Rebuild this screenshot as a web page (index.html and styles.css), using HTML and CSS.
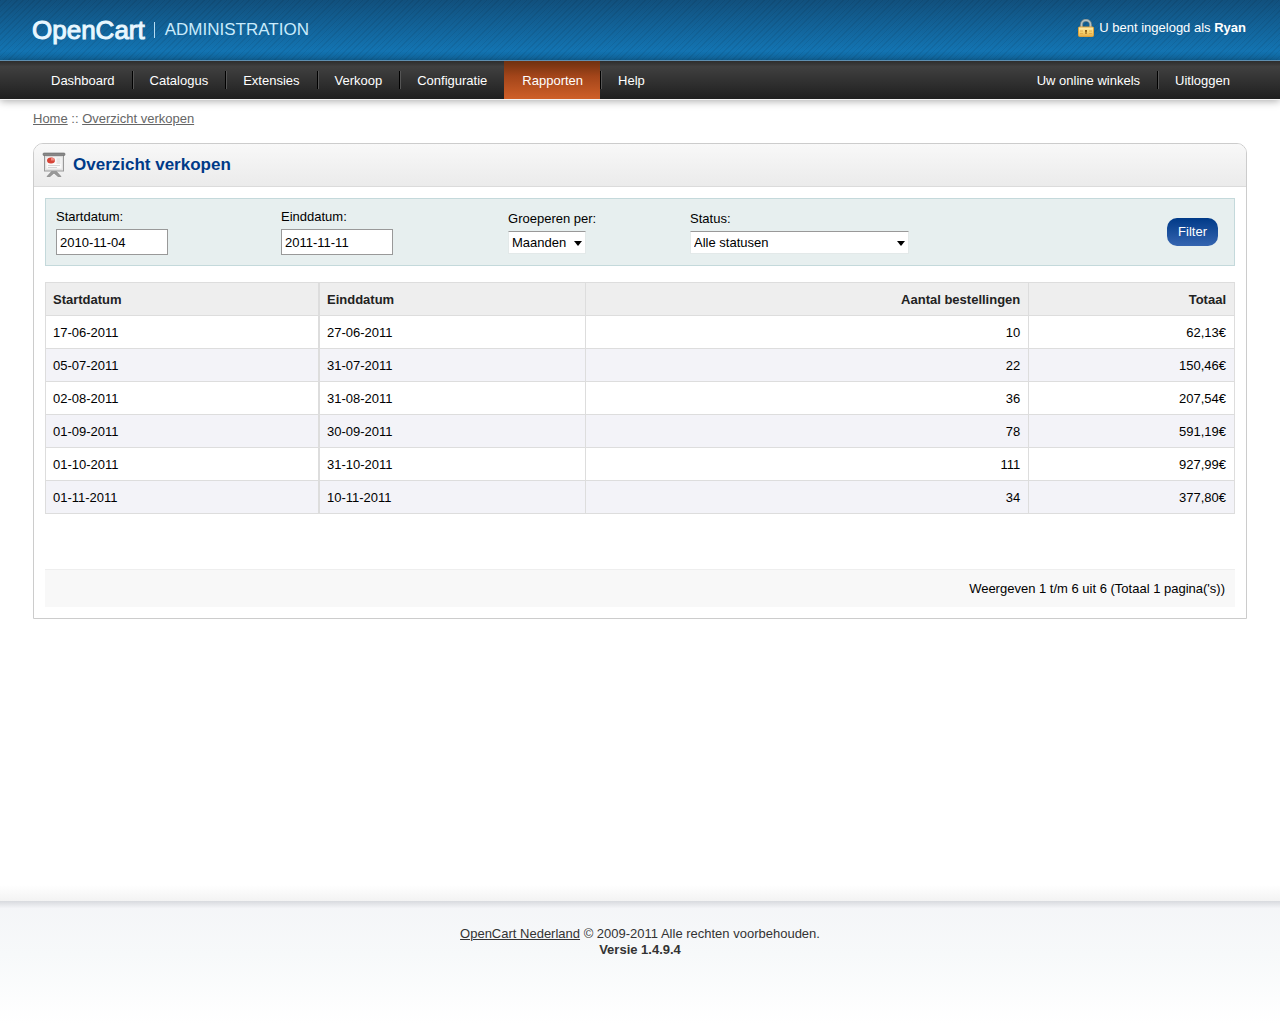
FILE: index.html
```html
<!DOCTYPE html>
<html lang="nl">
<head>
    <meta charset="UTF-8">
    <meta name="viewport" content="width=device-width, initial-scale=1.0">
    <title>Overzicht verkopen</title>
    <link rel="stylesheet" href="styles.css">
</head>
<body>

<header class="header">
    <div class="logo">
        <span class="logo-name">OpenCart</span>
        <span class="logo-section">ADMINISTRATION</span>
    </div>
    <div class="login">
        <svg class="lock" width="16" height="18" viewBox="0 0 16 18" aria-hidden="true">
            <defs>
                <linearGradient id="gold" x1="0" y1="0" x2="0" y2="1">
                    <stop offset="0" stop-color="#ffeeb0"/>
                    <stop offset="0.6" stop-color="#f8d068"/>
                    <stop offset="1" stop-color="#e8ac48"/>
                </linearGradient>
            </defs>
            <path d="M3.5 9V5.5a4.5 4.2 0 0 1 9 0V9" fill="none" stroke="#6e8489" stroke-width="3"/>
            <path d="M3.5 9V5.5a4.5 4.2 0 0 1 9 0V9" fill="none" stroke="#b4c2c3" stroke-width="1.4"/>
            <rect x="0.5" y="8" width="15" height="9.5" rx="1" fill="url(#gold)" stroke="#dda23b"/>
            <path d="M2 12h3M11 12h3M2 14.5h3M11 14.5h3" stroke="#e2ac4c"/>
            <path d="M7 11h2v1.5l-.4.5v2H7.4v-2l-.4-.5z" fill="#8a5b12"/>
        </svg>
        <span>U bent ingelogd als <strong>Ryan</strong></span>
    </div>
</header>

<nav class="menu">
    <ul>
        <li><a href="#">Dashboard</a></li>
        <li><a href="#">Catalogus</a></li>
        <li><a href="#">Extensies</a></li>
        <li><a href="#">Verkoop</a></li>
        <li><a href="#">Configuratie</a></li>
        <li class="selected"><a href="#">Rapporten</a></li>
        <li><a href="#">Help</a></li>
    </ul>
    <ul>
        <li><a href="#">Uw online winkels</a></li>
        <li><a href="#">Uitloggen</a></li>
    </ul>
</nav>

<main class="content">
    <div class="breadcrumb"><a href="#">Home</a> :: <a href="#">Overzicht verkopen</a></div>

    <section class="box">
        <div class="heading">
            <svg width="24" height="26" viewBox="0 0 24 26" aria-hidden="true">
                <path d="M11 18L5 24.5h3l4-3.5 4 3.5h3L13 18z" fill="#999" stroke="#777" stroke-width="0.6"/>
                <rect x="2.5" y="3" width="19" height="16" fill="#e6e6e6" stroke="#999"/>
                <rect x="4" y="5" width="16" height="12" fill="#fafafa" stroke="#ddd" stroke-width="0.6"/>
                <rect x="1" y="1" width="22" height="2.6" rx="1" fill="#888" stroke="#666" stroke-width="0.6"/>
                <ellipse cx="9" cy="8.5" rx="4" ry="3" fill="#d64538"/>
                <path d="M9 8.5V5.5a4 3 0 0 1 4 3z" fill="#ee8a80"/>
                <path d="M14.5 7h4M14.5 9h4M14.5 11h4M6 13.5h12M6 15.5h9" stroke="#ccc" stroke-width="0.8"/>
            </svg>
            <h1>Overzicht verkopen</h1>
        </div>

        <div class="box-content">
            <form class="filter">
                <div class="field">
                    <label for="date-start">Startdatum:</label>
                    <input type="text" id="date-start" value="2010-11-04">
                </div>
                <div class="field">
                    <label for="date-end">Einddatum:</label>
                    <input type="text" id="date-end" value="2011-11-11">
                </div>
                <div class="field">
                    <label for="group">Groeperen per:</label>
                    <div class="select">
                        <select id="group" class="group-select">
                            <option>Maanden</option>
                        </select>
                    </div>
                </div>
                <div class="field">
                    <label for="status">Status:</label>
                    <div class="select">
                        <select id="status" class="status-select">
                            <option>Alle statusen</option>
                        </select>
                    </div>
                </div>
                <button type="button" class="button">Filter</button>
            </form>

            <table class="list">
                <colgroup>
                    <col class="col-start">
                    <col class="col-end">
                    <col class="col-orders">
                    <col class="col-total">
                </colgroup>
                <thead>
                    <tr><th>Startdatum</th><th>Einddatum</th><th class="right">Aantal bestellingen</th><th class="right">Totaal</th></tr>
                </thead>
                <tbody>
                    <tr><td>17-06-2011</td><td>27-06-2011</td><td class="right">10</td><td class="right">62,13€</td></tr>
                    <tr><td>05-07-2011</td><td>31-07-2011</td><td class="right">22</td><td class="right">150,46€</td></tr>
                    <tr><td>02-08-2011</td><td>31-08-2011</td><td class="right">36</td><td class="right">207,54€</td></tr>
                    <tr><td>01-09-2011</td><td>30-09-2011</td><td class="right">78</td><td class="right">591,19€</td></tr>
                    <tr><td>01-10-2011</td><td>31-10-2011</td><td class="right">111</td><td class="right">927,99€</td></tr>
                    <tr><td>01-11-2011</td><td>10-11-2011</td><td class="right">34</td><td class="right">377,80€</td></tr>
                </tbody>
            </table>

            <div class="pagination">Weergeven 1 t/m 6 uit 6 (Totaal 1 pagina('s))</div>
        </div>
    </section>
</main>

<footer class="footer">
    <a href="#">OpenCart Nederland</a> © 2009-2011 Alle rechten voorbehouden.<br>
    <strong>Versie 1.4.9.4</strong>
</footer>

</body>
</html>
```
FILE: styles.css
```css
*,
*::before,
*::after {
    box-sizing: border-box;
}
body {
    display: flex;
    flex-direction: column;
    min-height: 100vh;
    margin: 0;
    background: #fff;
    color: #000;
    font-family: "Liberation Sans", Arial, sans-serif;
    font-size: 13px;
    line-height: 16px;
}

/* Header */
.header {
    display: flex;
    justify-content: space-between;
    align-items: center;
    height: 60px;
    padding: 0 34px 0 32px;
    background:
        repeating-linear-gradient(135deg, rgba(0, 0, 0, 0.07) 0 1px, transparent 1px 4px),
        linear-gradient(#11507d, #1374b2 85%, #10659c);
    color: #fff;
}
.logo {
    display: flex;
    align-items: center;
    color: #e8f7ff;
}
.logo-name {
    font-size: 26px;
    line-height: 32px;
    -webkit-text-stroke: 1px #e8f7ff;
}
.logo-section {
    margin-left: 9px;
    padding-left: 10px;
    border-left: 1px solid #b5dcf2;
    color: #c9ebfc;
    font-size: 17px;
}
.login {
    display: flex;
    align-items: center;
    gap: 5px;
    padding-bottom: 5px;
}

/* Menu */
.menu {
    display: flex;
    justify-content: space-between;
    height: 39px;
    padding: 0 33px;
    border-top: 1px solid #5f8fb0;
    background: linear-gradient(#2c2c2c, #404040 15%, #1f1f1f);
    box-shadow: 0 1px 0 #f4f4f4, 0 2px 8px rgba(0, 0, 0, 0.35);
}
.menu ul {
    display: flex;
    margin: 0;
    padding: 0;
    list-style: none;
}
.menu li {
    display: flex;
    align-items: center;
}
.menu li + li::before {
    content: "";
    width: 2px;
    height: 18px;
    margin-right: -2px;
    border-left: 1px solid #000;
    border-right: 1px solid #555;
}
.menu a {
    padding: 12px 17px 10px 18px;
    color: #fff;
    text-decoration: none;
}
.menu .selected {
    background: linear-gradient(#70310f, #a3451a 40%, #cf5f28);
}
.menu .selected::before {
    visibility: hidden;
}

/* Page */
.content {
    flex: 1;
    padding: 12px 33px 32px;
}
.breadcrumb,
.breadcrumb a {
    color: #666;
}
.box {
    margin-top: 16px;
    border: 1px solid #ccc;
    border-radius: 10px 10px 0 0;
}
.heading {
    display: flex;
    align-items: center;
    gap: 7px;
    height: 43px;
    padding-left: 8px;
    border-bottom: 1px solid #dbdbdb;
    border-radius: 9px 9px 0 0;
    background: linear-gradient(#f8f8f8, #ebebeb);
}
.heading h1 {
    margin: 0;
    color: #003a88;
    font-size: 17px;
    line-height: 20px;
}
.box-content {
    padding: 11px;
}

/* Filter */
.filter {
    display: grid;
    grid-template-columns: 225fr 227fr 182fr 477fr auto;
    align-items: center;
    height: 68px;
    padding: 0 16px 0 10px;
    border: 1px solid #c4d9db;
    background: #e7efef;
}
.field label {
    display: block;
    margin-bottom: 4px;
}
.field input {
    display: block;
    width: 112px;
    height: 26px;
    padding: 0 3px;
    border: 1px solid #999;
    background: #fff;
    font: inherit;
}
.select {
    position: relative;
    width: max-content;
}
.select::after {
    content: "";
    position: absolute;
    top: 10px;
    right: 4px;
    border: 4px solid transparent;
    border-top: 5px solid #000;
    border-bottom: 0;
    pointer-events: none;
}
.select select {
    display: block;
    height: 23px;
    padding: 1px 3px 0;
    border: 1px solid #e3e9e9;
    border-top-color: #999;
    background: #fff;
    color: #000;
    font: inherit;
    appearance: none;
}
.group-select {
    width: 78px;
}
.status-select {
    width: 219px;
}
.button {
    height: 28px;
    padding: 0 11px;
    border: 0;
    border-radius: 10px;
    background: linear-gradient(#003a88, #3565b0);
    color: #fff;
    font: inherit;
}

/* Table */
.list {
    width: 100%;
    margin-top: 16px;
    border-collapse: collapse;
    table-layout: fixed;
}
.col-start {
    width: 23%;
}
.col-end {
    width: 22.4%;
}
.col-orders {
    width: 37.3%;
}
.list th,
.list td {
    height: 33px;
    padding: 2px 8px 0 7px;
    border: 1px solid #ddd;
    text-align: left;
}
.list th:first-child,
.list td:first-child {
    border-right-width: 2px;
}
.list th {
    background: #eee;
    color: #222;
}
.list tbody tr:nth-child(even) {
    background: #f3f3f8;
}
.list .right {
    text-align: right;
}
.pagination {
    margin-top: 55px;
    padding: 11px 10px 10px;
    border-top: 1px solid #eee;
    background: #f8f8f8;
    text-align: right;
}

/* Footer */
.footer {
    height: 139px;
    padding-top: 41px;
    background:
        linear-gradient(#fff, #f3f3f3) top / 100% 16px no-repeat,
        linear-gradient(#d8dade, #f3f4f7) 0 16px / 100% 7px no-repeat,
        linear-gradient(#f3f4f7, #f7f9fa 50%, #fff);
    color: #333;
    text-align: center;
}
.footer a {
    color: #333;
}
```
